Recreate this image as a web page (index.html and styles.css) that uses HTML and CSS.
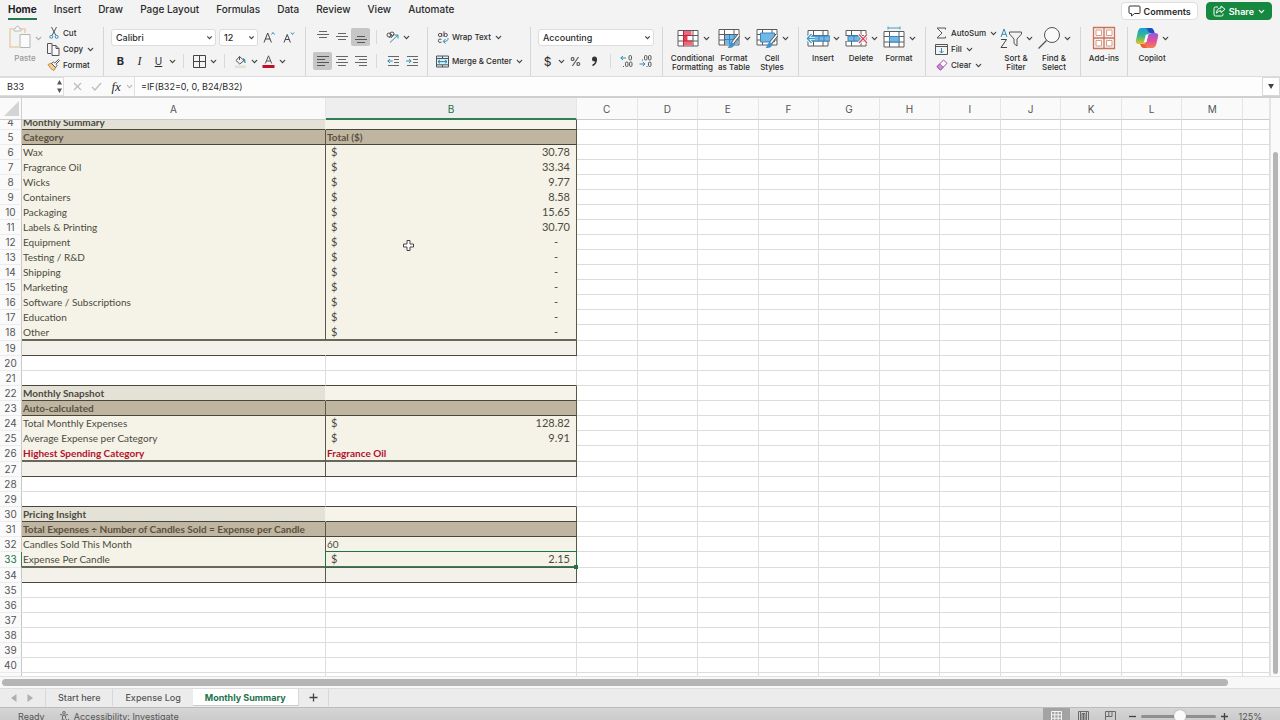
FILE: index.html
```html
<!DOCTYPE html>
<html lang="en">
<head>
<meta charset="utf-8">
<meta name="viewport" content="width=device-width, initial-scale=1">
<title>Monthly Summary</title>
<link rel="stylesheet" href="styles.css">
</head>
<body>
<svg class="defs" aria-hidden="true">
  <defs>
    <symbol id="chev" viewBox="0 0 7 7"><path d="M1.3 2.3 3.5 4.6 5.7 2.3" fill="none" stroke="currentColor" stroke-width="1.2" stroke-linecap="round"/></symbol>
    <symbol id="grid" viewBox="0 0 24 20"><path d="M2 2.500h20v15.500H2zM2 7.500h20M2 13h20M7.500 2.500V18M17 2.500V18" fill="#fff" stroke="#5c5c5c"/></symbol>
    <symbol id="brush" viewBox="0 0 12 14"><path d="M11 1 5.500 8" stroke="#555" stroke-width="3" stroke-linecap="round"/><path d="M11 1 5.500 8" stroke="#fff" stroke-width="1.500" stroke-linecap="round"/><path d="M.5 12.500c2-.5 1-4 4-4.500 2 0 2.500 2 1.500 3.500C5 13.200 2 13.500.5 12.500z" fill="#3d94cf"/></symbol>
  </defs>
</svg>

<header class="ribbon">
  <div class="menubar">
    <nav class="menus" aria-label="Ribbon tabs">
      <a href="#" class="menu menu-active">Home</a>
      <a href="#" class="menu">Insert</a>
      <a href="#" class="menu">Draw</a>
      <a href="#" class="menu">Page Layout</a>
      <a href="#" class="menu">Formulas</a>
      <a href="#" class="menu">Data</a>
      <a href="#" class="menu">Review</a>
      <a href="#" class="menu">View</a>
      <a href="#" class="menu">Automate</a>
    </nav>
    <div class="menu-actions">
      <button class="pill"><svg width="13" height="12" viewBox="0 0 13 12"><path d="M2 1h9q1 0 1 1v5.500q0 1-1 1H6.500L3.500 11V8.500H2q-1 0-1-1V2q0-1 1-1z" fill="none" stroke="#333"/></svg>Comments</button>
      <button class="pill pill-share"><svg width="13" height="12" viewBox="0 0 13 12"><path d="M5 2H2.500Q1 2 1 3.500v6Q1 11 2.500 11h6Q10 11 10 9.500V8.500M8 1l4 3.300L8 7.500V5.700Q5 5.600 3.500 8.300 3.700 3.200 8 3z" fill="none" stroke="#fff" stroke-linejoin="round"/></svg>Share<svg class="chev" width="7" height="7"><use href="#chev"/></svg></button>
    </div>
  </div>

  <div class="groups">
    <section class="group group-clip">
      <button class="big big-faded">
        <span class="big-top"><svg width="24" height="26" viewBox="0 0 24 26"><path d="M5 4H2v18h9M13 4h4v4" fill="none" stroke="#e6cfa6" stroke-width="1.500"/><path d="M6 6V3.500h1.500Q8 1 9.500 1t2 2.500H13V6z" fill="#f7f7f7" stroke="#bbb"/><path d="M12 9.500h10v13H12z" fill="#fafafa" stroke="#b5b5b5"/></svg><svg class="chev" width="7" height="7"><use href="#chev"/></svg></span>
        <span>Paste</span>
      </button>
      <div class="stack">
        <button class="line"><span class="tool-icon"><svg width="10" height="12" viewBox="0 0 10 12"><path d="M2.500 0 6.800 8.300M7.500 0 3.200 8.300" stroke="#555" fill="none"/><circle cx="2.300" cy="9.800" r="1.500" fill="none" stroke="#2d8fb8"/><circle cx="7.700" cy="9.800" r="1.500" fill="none" stroke="#2d8fb8"/></svg></span>Cut</button>
        <button class="line"><span class="tool-icon"><svg width="13" height="13" viewBox="0 0 13 13"><path d="M5 2.500V.500H.500v10H4" fill="none" stroke="#555"/><path d="M5 2.500h4l3 3v7H5zM9 2.500v3h3" fill="#fafafa" stroke="#555"/></svg></span>Copy<svg class="chev" width="7" height="7"><use href="#chev"/></svg></button>
        <button class="line"><span class="tool-icon"><svg width="13" height="12" viewBox="0 0 13 12"><path d="M1 5.500 5 4l4 4-2 3.500Q4 11 1 5.500z" fill="#f3cf93" stroke="#c98f35"/><path d="M4.500 4.500 6.500 3l1.300 1L11.500.5l1 1L9 5.200l1 1.300-1.500 2z" fill="#fff" stroke="#555"/></svg></span>Format</button>
      </div>
    </section>

    <section class="group group-font">
      <div class="row">
        <select class="combo combo-font" aria-label="Font"><option>Calibri</option></select>
        <select class="combo combo-size" aria-label="Font size"><option>12</option></select>
        <button class="tool" aria-label="Increase font size"><svg width="13" height="12" viewBox="0 0 13 12"><path d="M1 11.500 4.700 2l3.700 9.500M2.300 8h4.900" fill="none" stroke="#444"/><path d="m8.500 3.500 1.500-2 1.500 2" fill="none" stroke="#2d8fb8"/></svg></button>
        <button class="tool" aria-label="Decrease font size"><svg width="12" height="12" viewBox="0 0 12 12"><path d="M1 11.500 4.200 3.500l3.200 8M2.200 8.500h4" fill="none" stroke="#444"/><path d="m8 1.500 1.500 2 1.500-2" fill="none" stroke="#2d8fb8"/></svg></button>
      </div>
      <div class="row">
        <button class="tool tool-bold">B</button>
        <button class="tool tool-italic">I</button>
        <button class="tool tool-under">U</button>
        <button class="drop" aria-label="Underline styles"><svg class="chev" width="7" height="7"><use href="#chev"/></svg></button>
        <span class="sep"></span>
        <button class="tool" aria-label="Borders"><svg width="13" height="13" viewBox="0 0 13 13"><path d="M.5.5h12v12H.5zM6.500.5v12M.5 6.500h12" fill="none" stroke="#444"/></svg></button>
        <button class="drop" aria-label="Border styles"><svg class="chev" width="7" height="7"><use href="#chev"/></svg></button>
        <span class="sep"></span>
        <button class="tool" aria-label="Fill colour"><svg width="13" height="13" viewBox="0 0 13 13"><path d="M5.500 1.500 10 5.500 5.800 9 2 5.500zM5.500 1.500V5" fill="none" stroke="#555"/><path d="M9 4q2 0 2 4" fill="none" stroke="#2d8fb8" stroke-width="1.300"/><path d="M1 10.500h11V13H1z" fill="#e3e0d4"/></svg></button>
        <button class="drop" aria-label="Fill colours"><svg class="chev" width="7" height="7"><use href="#chev"/></svg></button>
        <button class="tool" aria-label="Font colour"><svg width="13" height="13" viewBox="0 0 13 13"><path d="M3.300 8.500 6.500.8l3.200 7.700M4.300 6h4.400" fill="none" stroke="#555"/><path d="M.5 10h12v3H.5z" fill="#c00f26"/></svg></button>
        <button class="drop" aria-label="Font colours"><svg class="chev" width="7" height="7"><use href="#chev"/></svg></button>
      </div>
    </section>

    <section class="group group-align">
      <div class="row">
        <button class="tool" aria-label="Top align"><svg width="12" height="12" viewBox="0 0 12 12"><path d="M2 .5h8M0 3.500h12M2 6.500h8" stroke="#666"/></svg></button>
        <button class="tool" aria-label="Middle align"><svg width="12" height="12" viewBox="0 0 12 12"><path d="M2 2.500h8M0 5.500h12M2 8.500h8" stroke="#666"/></svg></button>
        <button class="tool tool-on" aria-label="Bottom align"><svg width="12" height="12" viewBox="0 0 12 12"><path d="M2 5.500h8M0 8.500h12M2 11.500h8" stroke="#555"/></svg></button>
        <span class="sep"></span>
        <button class="tool" aria-label="Orientation"><svg width="13" height="12" viewBox="0 0 13 12"><circle cx="3" cy="4" r="2" fill="none" stroke="#555"/><circle cx="6" cy="3" r="2" fill="none" stroke="#555"/><path d="m3.500 7 2-4M5 7l3-4" stroke="#555"/><path d="M4 11.500 12 4M8.500 4H12v3.500" fill="none" stroke="#2d8fb8"/></svg></button>
        <button class="drop" aria-label="Orientation options"><svg class="chev" width="7" height="7"><use href="#chev"/></svg></button>
      </div>
      <div class="row">
        <button class="tool tool-on" aria-label="Align left"><svg width="12" height="12" viewBox="0 0 12 12"><path d="M0 1.500h12M0 4.500h8M0 7.500h12M0 10.500h8" stroke="#555"/></svg></button>
        <button class="tool" aria-label="Centre"><svg width="12" height="12" viewBox="0 0 12 12"><path d="M0 1.500h12M2 4.500h8M0 7.500h12M2 10.500h8" stroke="#666"/></svg></button>
        <button class="tool" aria-label="Align right"><svg width="12" height="12" viewBox="0 0 12 12"><path d="M0 1.500h12M4 4.500h8M0 7.500h12M4 10.500h8" stroke="#666"/></svg></button>
        <span class="sep"></span>
        <button class="tool" aria-label="Decrease indent"><svg width="12" height="12" viewBox="0 0 12 12"><path d="M1 1.500h11M7 4.500h5M7 7.500h5M1 10.500h11" stroke="#666"/><path d="M.8 6h5M3 4 .8 6 3 8" fill="none" stroke="#2d8fb8"/></svg></button>
        <button class="tool" aria-label="Increase indent"><svg width="12" height="12" viewBox="0 0 12 12"><path d="M1 1.500h11M7 4.500h5M7 7.500h5M1 10.500h11" stroke="#666"/><path d="M0 6h5M3 4l2.200 2L3 8" fill="none" stroke="#2d8fb8"/></svg></button>
      </div>
    </section>

    <section class="group group-wrap">
      <button class="line"><span class="tool-icon"><svg width="12" height="13" viewBox="0 0 12 13"><ellipse cx="3" cy="4" rx="1.700" ry="1.600" fill="none" stroke="#555"/><path d="M4.800 2.200v3.500M7 .3v5.400M4.500 8.300Q1.300 7 1.300 9.700t3.200 1.500" fill="none" stroke="#555"/><ellipse cx="8.700" cy="4" rx="1.700" ry="1.600" fill="none" stroke="#555"/><path d="M11 7q.5 3.500-4.500 3.500M8.500 8l-2.300 2.500L8.500 12.500" fill="none" stroke="#2d8fb8"/></svg></span>Wrap Text<svg class="chev" width="7" height="7"><use href="#chev"/></svg></button>
      <button class="line"><span class="tool-icon"><svg width="13" height="13" viewBox="0 0 13 13"><path d="M.5 1h12v11H.5z" fill="#d8eef7" stroke="#555"/><path d="M.5 3.500h12M.5 9.800h12M6.500 1v2.500M6.500 9.800V12" stroke="#555"/><path d="M2 6.600h9M4 4.800 2 6.600l2 1.800M9 4.800l2 1.800-2 1.800" fill="none" stroke="#1f86b5"/></svg></span>Merge &amp; Center<svg class="chev" width="7" height="7"><use href="#chev"/></svg></button>
    </section>

    <section class="group group-number">
      <div class="row">
        <select class="combo combo-format" aria-label="Number format"><option>Accounting</option></select>
      </div>
      <div class="row">
        <button class="tool tool-sign">$</button>
        <button class="drop" aria-label="Currencies"><svg class="chev" width="7" height="7"><use href="#chev"/></svg></button>
        <button class="tool tool-sign">%</button>
        <button class="tool" aria-label="Comma style"><svg width="7" height="11" viewBox="0 0 7 11"><circle cx="3.500" cy="3" r="2.500" fill="#333"/><path d="M5.300 3Q5.500 7.500 1.500 9.500" fill="none" stroke="#333" stroke-width="1.500"/></svg></button>
        <span class="sep"></span>
        <button class="tool" aria-label="Increase decimal"><svg width="13" height="12" viewBox="0 0 13 12"><rect x="9" y=".5" width="2.500" height="4.500" rx="1.200" fill="none" stroke="#555"/><rect x="5.500" y="7" width="2.500" height="4.500" rx="1.200" fill="none" stroke="#555"/><rect x="9.500" y="7" width="2.500" height="4.500" rx="1.200" fill="none" stroke="#555"/><path d="M3 11.500h1" stroke="#555"/><path d="M.8 3H6M3 1 .8 3 3 5" fill="none" stroke="#2d8fb8"/></svg></button>
        <button class="tool" aria-label="Decrease decimal"><svg width="13" height="12" viewBox="0 0 13 12"><rect x="5.500" y=".5" width="2.500" height="4.500" rx="1.200" fill="none" stroke="#555"/><rect x="9.500" y=".5" width="2.500" height="4.500" rx="1.200" fill="none" stroke="#555"/><rect x="9.500" y="7" width="2.500" height="4.500" rx="1.200" fill="none" stroke="#555"/><path d="M3 5h1M7.500 11.500h1" stroke="#555"/><path d="M.5 9h5.300M3.800 7 6 9l-2.200 2" fill="none" stroke="#2d8fb8"/></svg></button>
      </div>
    </section>

    <section class="group group-big">
      <button class="big">
        <span class="big-top"><svg width="24" height="20" viewBox="0 0 24 20"><use href="#grid"/><path d="M7.500 3h8v4.500h-8zM7.500 13h9v4.500h-9z" fill="#f0677b"/><path d="M7.500 7.500h4V13h-4z" fill="#e2445c"/><path d="M7.500 2.500V18M7.500 7.500h9M7.500 13h9" stroke="#b7293f"/></svg><svg class="chev" width="7" height="7"><use href="#chev"/></svg></span>
        <span>Conditional<br>Formatting</span>
      </button>
      <button class="big">
        <span class="big-top"><svg width="24" height="22" viewBox="0 0 24 22"><use href="#grid" width="24" height="20"/><path d="M8 8h13v9H8z" fill="#71b7e8"/><path d="M8 12.500h13M12.500 8v9M17 8v9" stroke="#3d86bd"/><use href="#brush" x="10" y="7" width="13" height="15"/></svg><svg class="chev" width="7" height="7"><use href="#chev"/></svg></span>
        <span>Format<br>as Table</span>
      </button>
      <button class="big">
        <span class="big-top"><svg width="24" height="22" viewBox="0 0 24 22"><use href="#grid" width="24" height="20"/><path d="M5.500 6h14v9h-14z" fill="#71b7e8" stroke="#3d86bd"/><use href="#brush" x="10" y="7" width="13" height="15"/></svg><svg class="chev" width="7" height="7"><use href="#chev"/></svg></span>
        <span>Cell<br>Styles</span>
      </button>
    </section>

    <section class="group group-big group-cells">
      <button class="big">
        <span class="big-top"><svg width="24" height="20" viewBox="0 0 24 20"><use href="#grid"/><path d="M5 8h19v5H5z" fill="#71b7e8" stroke="#3d86bd"/><path d="M13 8v5M18 8v5" stroke="#3d86bd"/><path d="M9 10.500H1.500M5.500 6l-4.300 4.500L5.500 15" fill="none" stroke="#fff" stroke-width="3"/><path d="M9 10.500H1.500M5.500 6l-4.300 4.500L5.500 15" fill="none" stroke="#3aa0cf" stroke-width="1.300"/></svg><svg class="chev" width="7" height="7"><use href="#chev"/></svg></span>
        <span>Insert</span>
      </button>
      <button class="big">
        <span class="big-top"><svg width="24" height="20" viewBox="0 0 24 20"><use href="#grid"/><path d="M0 8h5v5H0z" fill="#f3f3f3"/><path d="M4 8h12v5H4z" fill="#71b7e8" stroke="#3d86bd"/><path d="M10 8v5" stroke="#3d86bd"/><path d="m15 6.500 8 8.500M23 6.500 15 15" stroke="#fff" stroke-width="3"/><path d="m15 6.500 8 8.500M23 6.500 15 15" stroke="#dc4a5e" stroke-width="1.300"/></svg><svg class="chev" width="7" height="7"><use href="#chev"/></svg></span>
        <span>Delete</span>
      </button>
      <button class="big">
        <span class="big-top"><svg width="24" height="24" viewBox="0 0 24 24"><use href="#grid" y="3" width="24" height="20"/><path d="M7.500 10.500H17V16H7.500z" fill="#71b7e8" stroke="#3d86bd"/><path d="M6 2h12M6 .5v3M18 .5v3" stroke="#3aa0cf"/></svg><svg class="chev" width="7" height="7"><use href="#chev"/></svg></span>
        <span>Format</span>
      </button>
    </section>

    <section class="group group-edit">
      <div class="stack">
        <button class="line"><span class="tool-icon"><svg width="11" height="12" viewBox="0 0 11 12"><path d="M9.500 2.500V1H1l5 5-5 5h8.500V9.500" fill="none" stroke="#555"/></svg></span>AutoSum<svg class="chev" width="7" height="7"><use href="#chev"/></svg></button>
        <button class="line"><span class="tool-icon"><svg width="13" height="11" viewBox="0 0 13 11"><path d="M.5.5h12v10H.5zM.5 2.500h12" fill="none" stroke="#555"/><path d="M6.500 4v5M4.500 7l2 2 2-2" fill="none" stroke="#2d8fb8"/></svg></span>Fill<svg class="chev" width="7" height="7"><use href="#chev"/></svg></button>
        <button class="line"><span class="tool-icon"><svg width="12" height="12" viewBox="0 0 12 12"><path d="M7.500 1 11 4.300 4.500 11 1 7.700z" fill="#fff" stroke="#a04fae"/><path d="M3.700 5 7.200 8.300 4.500 11 1 7.700z" fill="#cf92d8" stroke="#a04fae"/></svg></span>Clear<svg class="chev" width="7" height="7"><use href="#chev"/></svg></button>
      </div>
      <button class="big">
        <span class="big-top"><svg width="24" height="22" viewBox="0 0 24 22"><path d="M2 10 5 2l3 8M3 7.300h4" fill="none" stroke="#2d8fb8"/><path d="M2 12.500h5.500L2 20.500h6" fill="none" stroke="#444"/><path d="M10.500 5h12v2L18 12v7l-3-2.500V12L10.500 7z" fill="none" stroke="#555"/></svg><svg class="chev" width="7" height="7"><use href="#chev"/></svg></span>
        <span>Sort &amp;<br>Filter</span>
      </button>
      <button class="big">
        <span class="big-top"><svg width="24" height="24" viewBox="0 0 24 24"><circle cx="15" cy="9" r="7.500" fill="#fafafa" stroke="#555"/><path d="M9.500 14.500 1.500 22.500" stroke="#555" stroke-width="1.300"/></svg><svg class="chev" width="7" height="7"><use href="#chev"/></svg></span>
        <span>Find &amp;<br>Select</span>
      </button>
    </section>

    <section class="group group-addins">
      <button class="big">
        <span class="big-top"><svg width="24" height="24" viewBox="0 0 24 24"><path d="M1.500 1.500h21v21h-21zM12 1.500v21M1.500 12h21" fill="none" stroke="#cb7358" stroke-width="1.300"/><path d="M4 4h5.500v5.500H4zM14.500 4H20v5.500h-5.500zM4 14.500h5.500V20H4zM14.500 14.500H20V20h-5.500z" fill="#fff" stroke="#dc9c86"/></svg></span>
        <span>Add-ins</span>
      </button>
    </section>

    <section class="group group-copilot">
      <button class="big">
        <span class="big-top"><svg width="24" height="22" viewBox="0 0 24 22"><defs><linearGradient id="cool" x1="0" y1="0" x2="0" y2="1"><stop offset="0" stop-color="#1b9be0"/><stop offset=".5" stop-color="#35b98c"/><stop offset="1" stop-color="#e9c41f"/></linearGradient><linearGradient id="warm" x1="0" y1="0" x2="0" y2="1"><stop offset="0" stop-color="#8e5be6"/><stop offset=".5" stop-color="#e04f9c"/><stop offset="1" stop-color="#f5814a"/></linearGradient></defs><path d="M6 1h10q2 0 3 3l.5 2h-4q-2 0-3 3l-2 5.500Q9.500 17 7 17H4Q0 17 1 13L3 4Q4 1 6 1z" fill="url(#cool)"/><path d="M10 1h6q2 0 3 3l.5 2H16q-2.500 0-3-2-.7-3-3-3z" fill="#1d4fb8"/><path d="M18 21H9q-2 0-3-2l-.8-2H8q2.500 0 3.300-3L13 8.500Q14 6 16.500 6H20q4 0 3 4l-2 8q-1 3-3 3z" fill="url(#warm)"/><path d="M5.200 17H8q2 0 2.700 2 .5 2 2 2H9q-2 0-3-2z" fill="#f0602f"/><path d="M10.800 7.500h2.500L11.500 15H9z" fill="#fff"/></svg><svg class="chev" width="7" height="7"><use href="#chev"/></svg></span>
        <span>Copilot</span>
      </button>
    </section>
  </div>
</header>

<div class="formula-bar">
  <div class="name-box">
    <input class="name-input" aria-label="Name box" value="B33">
    <svg width="7" height="13" viewBox="0 0 7 13"><path d="M3.500 0 6 4.500H1zM3.500 13 1 8.500h5z" fill="#555"/></svg>
  </div>
  <div class="formula-tools">
    <button class="tool" aria-label="Cancel"><svg width="9" height="9" viewBox="0 0 9 9"><path d="m1 1 7 7M8 1 1 8" stroke="#bdbdbd" stroke-width="1.300"/></svg></button>
    <button class="tool" aria-label="Enter"><svg width="11" height="9" viewBox="0 0 11 9"><path d="m1 5 3 3 6-7" fill="none" stroke="#bdbdbd" stroke-width="1.300"/></svg></button>
    <button class="tool tool-fx">fx</button>
    <svg class="chev chev-pale" width="7" height="7"><use href="#chev"/></svg>
  </div>
  <input class="formula-input" aria-label="Formula" value="=IF(B32=0, 0, B24/B32)">
  <button class="expand" aria-label="Expand formula bar"><svg width="6" height="5" viewBox="0 0 6 5"><path d="M0 0h6L3 5z" fill="#444"/></svg></button>
</div>

<main class="work">
  <div class="sheet">
    <table class="cells">
      <colgroup><col class="col-num"><col class="col-a"><col class="col-b"><col><col><col><col><col><col><col><col><col><col><col><col class="col-last"></colgroup>
      <thead><tr>
        <th class="corner"><svg width="15" height="15" viewBox="0 0 15 15"><path d="M15 0v15H0z" fill="#d4d4d4"/></svg></th>
        <th>A</th><th class="col-on">B</th><th>C</th><th>D</th><th>E</th><th>F</th><th>G</th><th>H</th><th>I</th><th>J</th><th>K</th><th>L</th><th>M</th><th></th>
      </tr></thead>
      <tbody id="rows"></tbody>
    </table>
    <svg class="cursor" width="13" height="13" viewBox="0 0 13 13"><path d="M5 1.500h3V5h3.500v3H8v3.500H5V8H1.500V5H5z" fill="#fff" stroke="#444"/></svg>
  </div>
  <div class="vscroll"><div class="vthumb"></div></div>
</main>
<div class="hscroll"><div class="hthumb"></div></div>

<nav class="tabs" aria-label="Sheets">
  <div class="tab-nav">
    <button class="arrow" aria-label="Previous sheet"><svg width="6" height="8" viewBox="0 0 6 8"><path d="M5.500 0v8L0 4z" fill="#b0b0b0"/></svg></button>
    <button class="arrow" aria-label="Next sheet"><svg width="6" height="8" viewBox="0 0 6 8"><path d="M.5 0v8L6 4z" fill="#b0b0b0"/></svg></button>
  </div>
  <button class="tab">Start here</button>
  <button class="tab tab-plain">Expense Log</button>
  <button class="tab tab-active">Monthly Summary</button>
  <button class="tab tab-add" aria-label="Add sheet"><svg width="9" height="9" viewBox="0 0 9 9"><path d="M4.500.5v8M.5 4.500h8" stroke="#444" stroke-width="1.300"/></svg></button>
</nav>

<footer class="status">
  <span class="ready">Ready</span>
  <button class="access"><svg width="11" height="12" viewBox="0 0 11 12"><circle cx="5" cy="1.800" r="1.300" fill="none" stroke="#666"/><path d="M1 3.500q4 2 8 0M3.500 5v3L2 11.500M6.500 5v2.500M5 8l-.8 3" fill="none" stroke="#666"/><path d="m7 8 3 3.500M10 8l-3 3.500" stroke="#666"/></svg>Accessibility: Investigate</button>
  <div class="views">
    <button class="view view-on" aria-label="Normal view"><svg width="11" height="11" viewBox="0 0 11 11"><path d="M.5.500h10v10H.500zM.5 3.800h10M.5 7.200h10M3.800.5v10M7.200.5v10" fill="none" stroke="#f4f4f4"/></svg></button>
    <button class="view" aria-label="Page layout view"><svg width="11" height="11" viewBox="0 0 11 11"><path d="M.5.5h10v10H.5zM2.500.5v10M8.500.5v10M4 2.500h3v7H4zM5.500 3v6" fill="none" stroke="#6a6a6a"/></svg></button>
    <button class="view" aria-label="Page break view"><svg width="11" height="11" viewBox="0 0 11 11"><path d="M.5.5h10v10H.5zM.5 5.500h6.500V.5M3.800.5v5" fill="none" stroke="#6a6a6a"/></svg></button>
  </div>
  <div class="zoom">
    <button class="step" aria-label="Zoom out"><svg width="7" height="7" viewBox="0 0 7 7"><path d="M0 3.500h7" stroke="#444" stroke-width="1.300"/></svg></button>
    <input class="slider" type="range" min="0" max="100" value="53" aria-label="Zoom">
    <button class="step" aria-label="Zoom in"><svg width="7" height="7" viewBox="0 0 7 7"><path d="M0 3.500h7M3.500 0v7" stroke="#444" stroke-width="1.300"/></svg></button>
    <span class="percent">125%</span>
  </div>
</footer>
<script src="script.js"></script>
</body>
</html>
```
FILE: styles.css
```css
* { box-sizing: border-box; }

html { height: 100%; overflow: hidden; }

body {
  margin: 0;
  height: calc(100vh + 5px);
  display: flex;
  flex-direction: column;
  overflow: hidden;
  font-family: Inter, "Liberation Sans", sans-serif;
  font-size: 8px;
  color: #2b2b2b;
  background: #fff;
}

button, input, select { font: inherit; color: inherit; margin: 0; }
button { border: 0; padding: 0; background: none; }
svg { display: block; flex: none; }
.defs { position: absolute; width: 0; height: 0; }
.chev { color: #444; }
.chev-pale { color: #bbb; }

/* Ribbon */
.ribbon { flex: none; height: 77px; background: #f3f3f3; border-bottom: 1px solid #dcdcdc; }
.menubar { display: flex; justify-content: space-between; height: 22px; padding: 0 8px; }
.menus { display: flex; gap: 17px; }
.menu {
  height: 20px;
  line-height: 19px;
  font-size: 10px;
  font-weight: 500;
  color: #2b2b2b;
  text-decoration: none;
}
.menu-active { font-weight: 700; color: #222; border-bottom: 2px solid #217a4b; }
.menu-actions { display: flex; gap: 8px; padding-top: 2px; }
.pill {
  display: flex;
  align-items: center;
  gap: 3px;
  height: 18px;
  padding: 0 6px;
  border: 1px solid #dedede;
  border-radius: 4px;
  background: #fff;
  font-size: 9px;
  font-weight: 600;
}
.pill-share { background: #16883f; border-color: #16883f; color: #fff; }
.pill-share .chev { color: #fff; margin-left: 1px; }

.groups { display: flex; height: 54px; padding-top: 5px; }
.group { flex: none; height: 49px; border-right: 1px solid #d6d6d6; font-weight: 500; }
.group-clip { width: 104px; display: flex; padding-left: 7px; }
.group-font { width: 202px; padding-left: 7px; }
.group-align { width: 122px; padding-left: 7px; }
.group-wrap { width: 103px; padding-left: 5px; }
.group-number { width: 132px; padding-left: 7px; }
.group-big { width: 136px; padding-left: 8px; display: flex; gap: 2px; }
.group-cells { width: 127px; }
.group-edit { width: 155px; padding-left: 6px; display: flex; gap: 2px; }
.group-addins { width: 47px; display: flex; justify-content: center; }
.group-copilot { padding-left: 6px; display: flex; border-right: 0; }

.row { display: flex; align-items: center; height: 20px; margin-bottom: 4px; }
.tool { width: 19px; height: 18px; display: flex; align-items: center; justify-content: center; flex: none; }
.tool-on { background: #c6c6c6; border-radius: 2px; }
.tool-bold { font-size: 11px; font-weight: 700; }
.tool-italic { font-family: "Liberation Serif", serif; font-size: 12px; font-style: italic; }
.tool-under { font-size: 10px; font-weight: 400; text-decoration: underline; }
.tool-sign { font-size: 12px; font-weight: 400; }
.drop { width: 9px; height: 18px; display: flex; align-items: center; justify-content: center; flex: none; }
.sep { width: 1px; height: 14px; margin: 0 6px; background: #d9d9d9; }

.combo {
  appearance: none;
  height: 17px;
  padding: 0 4px;
  border: 1px solid #dcdcdc;
  border-radius: 3px;
  background: #fff url("data:image/svg+xml,%3Csvg xmlns='http://www.w3.org/2000/svg' width='7' height='7'%3E%3Cpath d='M1.300 2.300 3.500 4.600 5.700 2.300' fill='none' stroke='%23444' stroke-width='1.200'/%3E%3C/svg%3E") no-repeat right 2px center;
  font-size: 9px;
}
.combo-font { width: 105px; margin-right: 3px; }
.combo-size { width: 39px; margin-right: 2px; }
.combo-format { width: 116px; }

.line { display: flex; align-items: center; height: 16px; white-space: nowrap; }
.line .chev { margin-left: 4px; }
.tool-icon { width: 19px; display: flex; justify-content: center; flex: none; }
.group-wrap .line { height: 20px; margin-bottom: 4px; }
.stack { margin-top: -2px; }
.group-clip .stack { padding-left: 1px; }
.group-edit .stack { width: 64px; }

.big { width: 36px; display: flex; flex-direction: column; align-items: center; line-height: 9px; }
.group-big .big:first-child { width: 43px; }
.group-cells { padding-left: 6px; }
.group-cells .big:first-child { width: 36px; }
.big-top { display: flex; align-items: center; gap: 3px; height: 22px; margin-bottom: 5px; }
.big-faded { color: #9a9a9a; }
.big-faded .chev { color: #aaa; }

/* Formula bar */
.formula-bar { flex: none; height: 21px; display: flex; background: #f3f3f3; border-bottom: 2px solid #cfcfcf; }
.name-box { width: 64px; display: flex; align-items: center; background: #fff; border: 1px solid #dedede; border-left: 0; padding: 0 0 0 7px; }
.name-input { flex: 1; min-width: 0; border: 0; padding: 0; background: none; font-size: 9px; }
.formula-tools { width: 71px; display: flex; align-items: center; justify-content: space-between; padding: 0 1px 0 4px; border-right: 1px solid #e0e0e0; background: #fafafa; }
.tool-fx { font-family: "Liberation Serif", serif; font-size: 13px; font-style: italic; }
.formula-input { flex: 1; border: 0; padding: 0 6px; background: #fdfdfd; font-size: 9px; }
.expand { width: 18px; display: flex; align-items: center; justify-content: center; background: #fff; border: 1px solid #d8d8d8; }

/* Sheet */
.work { flex: 1; min-height: 0; display: flex; }
.sheet { flex: 1; min-width: 0; overflow: hidden; position: relative; }
.cells { width: 100%; table-layout: fixed; border-collapse: separate; border-spacing: 0; }
.col-num { width: 22px; }
.col-a { width: 304px; }
.col-b { width: 251px; }
.col-last { width: 27px; }
.cells th { padding: 0; font-weight: 400; color: #555; text-align: center; vertical-align: top; }
.cells thead th {
  height: 22px;
  padding-top: 2px;
  font-size: 10px;
  line-height: 18px;
  background: #fafafa;
  border-right: 1px solid #e6e6e6;
  border-bottom: 1px solid #cbcbcb;
}
.cells thead .corner { padding: 3px 0 0 4px; border-right-color: #d0d0d0; }
.cells thead .col-on { background: #eee; color: #21724b; border-bottom: 2px solid #2d7d55; }
.cells tbody th {
  height: 15px;
  font-size: 10px;
  line-height: 14px;
  background: #fafafa;
  border-right: 1px solid #c8c8c8;
  border-bottom: 1px solid #ececec;
}
.cells td {
  height: 15px;
  padding: 0 0 0 1px;
  border-right: 1px solid #dedede;
  border-bottom: 1px solid #dcdcdc;
  font-family: Lato, "Noto Sans", sans-serif;
  font-size: 10px;
  line-height: 14px;
  vertical-align: top;
  white-space: nowrap;
  color: #4c4a40;
}
.cells tr.scrolled > * { height: 10px; }
.clip { display: flex; align-items: flex-end; height: 9px; line-height: 14px; overflow: hidden; }
th .clip { justify-content: center; }
.cells tr.thick > * { height: 16px; }

.cells td.title { background: #e4e2d6; font-weight: 700; border-right-color: #f1efe5; }
.cells td.title-side { background: #f6f4ea; }
.cells td.band { background: #bfb5a0; font-weight: 700; color: #5a5040; }
.cells td.body { background: #f5f3e7; border-bottom: 0; }
.cells td.foot { background: #f3f1e9; }
.cells td.alert { color: #b3122f; font-weight: 700; }
.cells td.edge { border-right-color: #5b574b; }
.cells td.open { border-right-color: #f4f2e9; }
.cells td.rule { border-bottom-color: #4a463a; }
.cells td.double { border-bottom: 2px solid #69665a; }
.money { display: flex; justify-content: space-between; padding: 0 6px 0 4px; font-size: 11px; }
.money .dash { padding-right: 12px; }

.cells tbody th.row-on { color: #21724b; border-right-color: #2d7d55; }
.cells td.selected { position: relative; }
.selected::before { content: ""; position: absolute; inset: -1px -1px -2px -1px; border: 1px solid #21724b; }
.selected::after { content: ""; position: absolute; right: -2px; bottom: -3px; width: 4px; height: 4px; background: #21724b; }
.cursor { position: absolute; left: 402px; top: 141px; }

.vscroll { flex: none; width: 10px; padding: 54px 2px 2px; background: #fafafa; border-left: 1px solid #e4e4e4; }
.vthumb { height: 100%; border-radius: 3px; background: #b5b5b5; }
.hscroll { flex: none; height: 12px; padding: 2px 52px 2px 2px; background: #f8f8f8; border-top: 1px solid #e2e2e2; }
.hthumb { height: 7px; border-radius: 4px; background: #b5b5b5; }

/* Sheet tabs */
.tabs { flex: none; height: 19px; display: flex; background: #ececec; border-top: 1px solid #dcdcdc; font-size: 9px; font-weight: 500; color: #555; }
.tab-nav { width: 46px; display: flex; align-items: center; gap: 10px; padding-left: 11px; border-right: 1px solid #d8d8d8; }
.tab { height: 17px; padding: 0 12px; border-right: 1px solid #d8d8d8; }
.tab-plain { border-right: 0; }
.tab-active { background: #fff; color: #21724b; font-weight: 700; border-bottom: 1px solid #ccc; }
.tab-add { padding: 0 10px; }

/* Status bar */
.status {
  flex: none;
  height: 18px;
  display: flex;
  align-items: center;
  padding: 0 18px;
  border-top: 1px solid #bcbcbc;
  background: linear-gradient(#d6d6d6, #c6c6c6);
  font-size: 9px;
  color: #555;
}
.ready { margin-right: 14px; }
.access { display: flex; align-items: center; gap: 4px; }
.views { display: flex; margin-left: auto; height: 100%; }
.view { width: 27px; display: flex; align-items: center; justify-content: center; }
.view-on { background: #a3a3a3; }
.zoom { display: flex; align-items: center; gap: 5px; margin-left: 5px; }
.slider { appearance: none; width: 75px; height: 12px; background: none; }
.slider::-webkit-slider-runnable-track { height: 3px; border-radius: 2px; background: #8f8f8f; }
.slider::-webkit-slider-thumb { appearance: none; width: 12px; height: 12px; margin-top: -5px; border-radius: 50%; background: #fafafa; box-shadow: 0 0 1px #777; }
.percent { margin-left: 6px; }
```
FILE: script.js
```js
const expenses = [
  ["Wax", "30.78"], ["Fragrance Oil", "33.34"], ["Wicks", "9.77"],
  ["Containers", "8.58"], ["Packaging", "15.65"], ["Labels & Printing", "30.70"],
  ["Equipment", "-"], ["Testing / R&D", "-"], ["Shipping", "-"],
  ["Marketing", "-"], ["Software / Subscriptions", "-"], ["Education", "-"], ["Other", "-"]
];

const money = value => ({ value });
const rows = {
  4: ["Monthly Summary", "", "title open rule", "title-side edge rule"],
  5: ["Category", "Total ($)", "band edge rule", "band edge rule"],
  19: ["", "", "foot open rule", "foot edge rule"],
  21: ["", "", "rule", "rule"],
  22: ["Monthly Snapshot", "", "title open rule", "title-side edge rule"],
  23: ["Auto-calculated", "", "band edge rule", "band edge rule"],
  24: ["Total Monthly Expenses", money("128.82"), "body edge", "body edge"],
  25: ["Average Expense per Category", money("9.91"), "body edge", "body edge"],
  26: ["Highest Spending Category", "Fragrance Oil", "body alert edge double", "body alert edge double"],
  27: ["", "", "foot edge rule", "foot edge rule"],
  29: ["", "", "rule", "rule"],
  30: ["Pricing Insight", "", "title open rule", "title-side edge rule"],
  31: ["Total Expenses ÷ Number of Candles Sold = Expense per Candle", "", "band edge rule", "band edge rule"],
  32: ["Candles Sold This Month", "60", "body edge", "body edge"],
  33: ["Expense Per Candle", money("2.15"), "body edge double", "body edge double selected"],
  34: ["", "", "foot edge rule", "foot edge rule"]
};
expenses.forEach(([name, total], i) => {
  const last = i === expenses.length - 1 ? " double" : "";
  rows[6 + i] = [name, money(total), "body edge" + last, "body edge" + last];
});

const thick = [18, 26, 33];
const body = document.getElementById("rows");

function fill(cell, content, scrolled) {
  if (content && content.value) {
    const wrap = document.createElement("div");
    wrap.className = "money";
    const sign = document.createElement("span");
    sign.textContent = "$";
    const amount = document.createElement("span");
    amount.textContent = content.value;
    if (content.value === "-") amount.className = "dash";
    wrap.append(sign, amount);
    cell.append(wrap);
  } else if (scrolled) {
    const clip = document.createElement("div");
    clip.className = "clip";
    clip.textContent = content;
    cell.append(clip);
  } else {
    cell.textContent = content || "";
  }
}

for (let n = 4; n <= 41; n++) {
  const tr = document.createElement("tr");
  const data = rows[n] || ["", "", "", ""];
  const scrolled = n === 4;
  if (scrolled) tr.className = "scrolled";
  if (thick.includes(n)) tr.className = "thick";
  const head = document.createElement("th");
  if (n === 33) head.className = "row-on";
  fill(head, n < 41 ? String(n) : "", scrolled);
  tr.append(head);
  for (let c = 0; c < 14; c++) {
    const td = document.createElement("td");
    if (c < 2) {
      td.className = data[c + 2];
      fill(td, data[c], scrolled);
    }
    tr.append(td);
  }
  body.append(tr);
}
```
